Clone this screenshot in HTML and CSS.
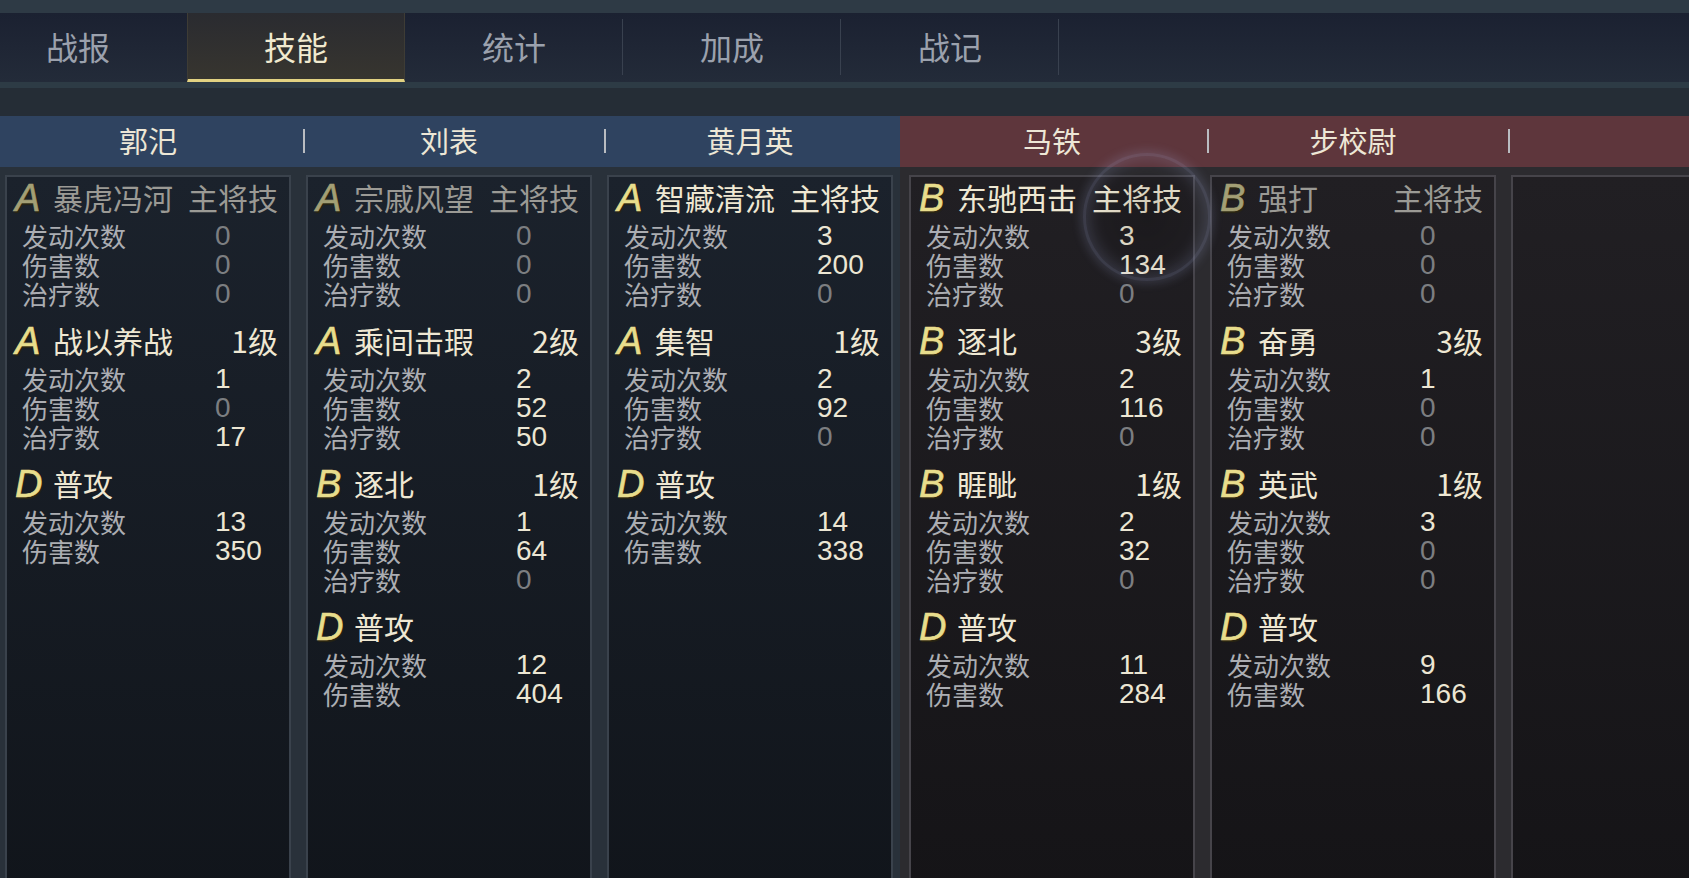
FILE: index.html
```html
<!DOCTYPE html>
<html lang="zh">
  <head>
    <meta charset="UTF-8" />
    <title>技能</title>
    <link rel="stylesheet" href="styles.css">
  </head>
  <body>
    <div class="topband"></div>
    <nav class="tabs">
      <div class="tab">战报</div>
      <div class="tab active">技能</div>
      <div class="tab sep">统计</div>
      <div class="tab sep">加成</div>
      <div class="tab sep">战记</div>
    </nav>
    <div class="strip"></div>
    <div class="band"></div>

    <div class="names">
      <div class="side blue">
        <div class="name">郭汜</div>
        <div class="name sep">刘表</div>
        <div class="name sep">黄月英</div>
      </div>
      <div class="side red">
        <div class="name">马铁</div>
        <div class="name sep">步校尉</div>
        <div class="name sep"></div>
      </div>
    </div>

    <div class="board">
      <div class="side blue">
        <!-- 郭汜 -->
        <div class="card">
          <div class="skill dim">
            <div class="skill-head"><span class="letter">A</span><span class="skill-name">暴虎冯河</span><span>主将技</span></div>
            <div class="stats">
              <span>发动次数</span><span class="v z">0</span>
              <span>伤害数</span><span class="v z">0</span>
              <span>治疗数</span><span class="v z">0</span>
            </div>
          </div>
          <div class="skill">
            <div class="skill-head"><span class="letter">A</span><span class="skill-name">战以养战</span><span>1级</span></div>
            <div class="stats">
              <span>发动次数</span><span class="v">1</span>
              <span>伤害数</span><span class="v z">0</span>
              <span>治疗数</span><span class="v">17</span>
            </div>
          </div>
          <div class="skill">
            <div class="skill-head"><span class="letter">D</span><span class="skill-name">普攻</span></div>
            <div class="stats">
              <span>发动次数</span><span class="v">13</span>
              <span>伤害数</span><span class="v">350</span>
            </div>
          </div>
        </div>

        <!-- 刘表 -->
        <div class="card">
          <div class="skill dim">
            <div class="skill-head"><span class="letter">A</span><span class="skill-name">宗戚风望</span><span>主将技</span></div>
            <div class="stats">
              <span>发动次数</span><span class="v z">0</span>
              <span>伤害数</span><span class="v z">0</span>
              <span>治疗数</span><span class="v z">0</span>
            </div>
          </div>
          <div class="skill">
            <div class="skill-head"><span class="letter">A</span><span class="skill-name">乘间击瑕</span><span>2级</span></div>
            <div class="stats">
              <span>发动次数</span><span class="v">2</span>
              <span>伤害数</span><span class="v">52</span>
              <span>治疗数</span><span class="v">50</span>
            </div>
          </div>
          <div class="skill">
            <div class="skill-head"><span class="letter">B</span><span class="skill-name">逐北</span><span>1级</span></div>
            <div class="stats">
              <span>发动次数</span><span class="v">1</span>
              <span>伤害数</span><span class="v">64</span>
              <span>治疗数</span><span class="v z">0</span>
            </div>
          </div>
          <div class="skill">
            <div class="skill-head"><span class="letter">D</span><span class="skill-name">普攻</span></div>
            <div class="stats">
              <span>发动次数</span><span class="v">12</span>
              <span>伤害数</span><span class="v">404</span>
            </div>
          </div>
        </div>

        <!-- 黄月英 -->
        <div class="card">
          <div class="skill">
            <div class="skill-head"><span class="letter">A</span><span class="skill-name">智藏清流</span><span>主将技</span></div>
            <div class="stats">
              <span>发动次数</span><span class="v">3</span>
              <span>伤害数</span><span class="v">200</span>
              <span>治疗数</span><span class="v z">0</span>
            </div>
          </div>
          <div class="skill">
            <div class="skill-head"><span class="letter">A</span><span class="skill-name">集智</span><span>1级</span></div>
            <div class="stats">
              <span>发动次数</span><span class="v">2</span>
              <span>伤害数</span><span class="v">92</span>
              <span>治疗数</span><span class="v z">0</span>
            </div>
          </div>
          <div class="skill">
            <div class="skill-head"><span class="letter">D</span><span class="skill-name">普攻</span></div>
            <div class="stats">
              <span>发动次数</span><span class="v">14</span>
              <span>伤害数</span><span class="v">338</span>
            </div>
          </div>
        </div>
      </div>

      <div class="side red">
        <!-- 马铁 -->
        <div class="card">
          <div class="skill">
            <div class="skill-head"><span class="letter">B</span><span class="skill-name">东驰西击</span><span>主将技</span></div>
            <div class="stats">
              <span>发动次数</span><span class="v">3</span>
              <span>伤害数</span><span class="v">134</span>
              <span>治疗数</span><span class="v z">0</span>
            </div>
          </div>
          <div class="skill">
            <div class="skill-head"><span class="letter">B</span><span class="skill-name">逐北</span><span>3级</span></div>
            <div class="stats">
              <span>发动次数</span><span class="v">2</span>
              <span>伤害数</span><span class="v">116</span>
              <span>治疗数</span><span class="v z">0</span>
            </div>
          </div>
          <div class="skill">
            <div class="skill-head"><span class="letter">B</span><span class="skill-name">睚眦</span><span>1级</span></div>
            <div class="stats">
              <span>发动次数</span><span class="v">2</span>
              <span>伤害数</span><span class="v">32</span>
              <span>治疗数</span><span class="v z">0</span>
            </div>
          </div>
          <div class="skill">
            <div class="skill-head"><span class="letter">D</span><span class="skill-name">普攻</span></div>
            <div class="stats">
              <span>发动次数</span><span class="v">11</span>
              <span>伤害数</span><span class="v">284</span>
            </div>
          </div>
        </div>

        <!-- 步校尉 -->
        <div class="card">
          <div class="skill dim">
            <div class="skill-head"><span class="letter">B</span><span class="skill-name">强打</span><span>主将技</span></div>
            <div class="stats">
              <span>发动次数</span><span class="v z">0</span>
              <span>伤害数</span><span class="v z">0</span>
              <span>治疗数</span><span class="v z">0</span>
            </div>
          </div>
          <div class="skill">
            <div class="skill-head"><span class="letter">B</span><span class="skill-name">奋勇</span><span>3级</span></div>
            <div class="stats">
              <span>发动次数</span><span class="v">1</span>
              <span>伤害数</span><span class="v z">0</span>
              <span>治疗数</span><span class="v z">0</span>
            </div>
          </div>
          <div class="skill">
            <div class="skill-head"><span class="letter">B</span><span class="skill-name">英武</span><span>1级</span></div>
            <div class="stats">
              <span>发动次数</span><span class="v">3</span>
              <span>伤害数</span><span class="v z">0</span>
              <span>治疗数</span><span class="v z">0</span>
            </div>
          </div>
          <div class="skill">
            <div class="skill-head"><span class="letter">D</span><span class="skill-name">普攻</span></div>
            <div class="stats">
              <span>发动次数</span><span class="v">9</span>
              <span>伤害数</span><span class="v">166</span>
            </div>
          </div>
        </div>

        <!-- empty slot -->
        <div class="card"></div>
      </div>
    </div>

    <!-- lens flare ring over 马铁 card -->
    <div class="flare"></div>
  </body>
</html>
```

FILE: styles.css
```css
body {
  margin: 0;
  width: 1689px;
  height: 878px;
  overflow: hidden;
  position: relative;
  font-family: "Liberation Sans", "Noto Sans CJK SC", sans-serif;
  background: linear-gradient(to right, #29313a 0, #29313a 900px, #2c2b2f 900px);
}

.topband {
  height: 13px;
  background: #2e3a45;
}

/* tab bar */
.tabs {
  display: flex;
  height: 69px;
  margin-left: -31px;
  background: linear-gradient(to bottom, #1b2131, #232b39);
}

.tab {
  position: relative;
  width: 218px;
  flex-shrink: 0;
  box-sizing: border-box;
  display: flex;
  align-items: center;
  justify-content: center;
  padding-bottom: 4px;
  font-family: "Noto Sans CJK SC", sans-serif;
  font-size: 32px;
  color: #9ba1ad;
}

.tab.active {
  color: #f1eacf;
  padding-bottom: 1px;
  background: linear-gradient(to bottom, #2a2b30, #37352f);
  border-left: 1px solid #3e3c35;
  border-right: 1px solid #3e3c35;
  border-bottom: 3px solid #e2d282;
}

.tab.sep::after {
  content: "";
  position: absolute;
  right: 0;
  top: 6px;
  bottom: 7px;
  width: 1px;
  background: #39414f;
}

.strip {
  height: 6px;
  background: #2d3b45;
}

.band {
  height: 28px;
  background: #252d36;
}

/* general names */
.names {
  display: flex;
  height: 51px;
}

.side {
  display: flex;
  gap: 15px;
  box-sizing: border-box;
}

.blue {
  width: 900px;
  flex-shrink: 0;
  padding-left: 5px;
}

.red {
  flex: 1;
  padding-left: 9px;
}

.names .blue {
  background: #2f4360;
}

.names .red {
  background: #5e363c;
}

.name {
  position: relative;
  width: 286px;
  flex-shrink: 0;
  display: flex;
  align-items: center;
  justify-content: center;
  padding-bottom: 3px;
  box-sizing: border-box;
  font-family: "Noto Sans CJK SC", sans-serif;
  font-size: 29px;
  color: #ede7d6;
}

.name.sep::before {
  content: "";
  position: absolute;
  left: -3px;
  top: 13px;
  width: 2px;
  height: 24px;
  background: #b9bcc1;
}

/* cards */
.board {
  display: flex;
  padding-top: 8px;
}

.card {
  width: 286px;
  height: 720px;
  flex-shrink: 0;
  box-sizing: border-box;
  padding: 0 11px 0 8px;
  border: 2px solid #3a424c;
  background: linear-gradient(to bottom, #1b222c, #11151b);
}

.red .card {
  border-color: #46444a;
  background: linear-gradient(to bottom, #211f23, #151417);
}

.skill + .skill {
  margin-top: 12px;
}

.skill-head {
  display: flex;
  align-items: center;
  height: 40px;
  font-family: "Noto Sans CJK SC", sans-serif;
  font-size: 30px;
  color: #efe8d3;
}

.letter {
  width: 38px;
  margin-top: 2px;
  font-family: "Liberation Sans", sans-serif;
  font-style: italic;
  font-size: 38px;
  line-height: 38px;
  color: #e8dd8c;
  -webkit-text-stroke: 0.6px #e8dd8c;
  text-shadow: 1px 2px 1px #2a2612;
}

.skill-name {
  flex: 1;
}

.dim .skill-head {
  color: #9b9a95;
}

.dim .letter {
  color: #a39f75;
  -webkit-text-stroke-color: #a39f75;
}

.stats {
  display: grid;
  grid-template-columns: 193px auto;
  margin-top: 4px;
  padding-left: 7px;
  font-family: "Noto Sans CJK SC", sans-serif;
  font-size: 26px;
  line-height: 29px;
  color: #abadb2;
}

.stats .v {
  font-family: "Liberation Sans", sans-serif;
  font-size: 28px;
  color: #ece6d3;
}

.stats .z {
  color: #7c7e81;
}

.flare {
  position: absolute;
  left: 1083px;
  top: 153px;
  width: 128px;
  height: 128px;
  box-sizing: border-box;
  border-radius: 50%;
  pointer-events: none;
  border: 3px solid rgba(170, 180, 230, 0.2);
  box-shadow: 0 0 10px 3px rgba(170, 180, 230, 0.16), inset 0 0 14px 4px rgba(170, 180, 230, 0.16);
  background: radial-gradient(circle, rgba(0, 0, 0, 0.14), rgba(0, 0, 0, 0) 75%);
}
```
